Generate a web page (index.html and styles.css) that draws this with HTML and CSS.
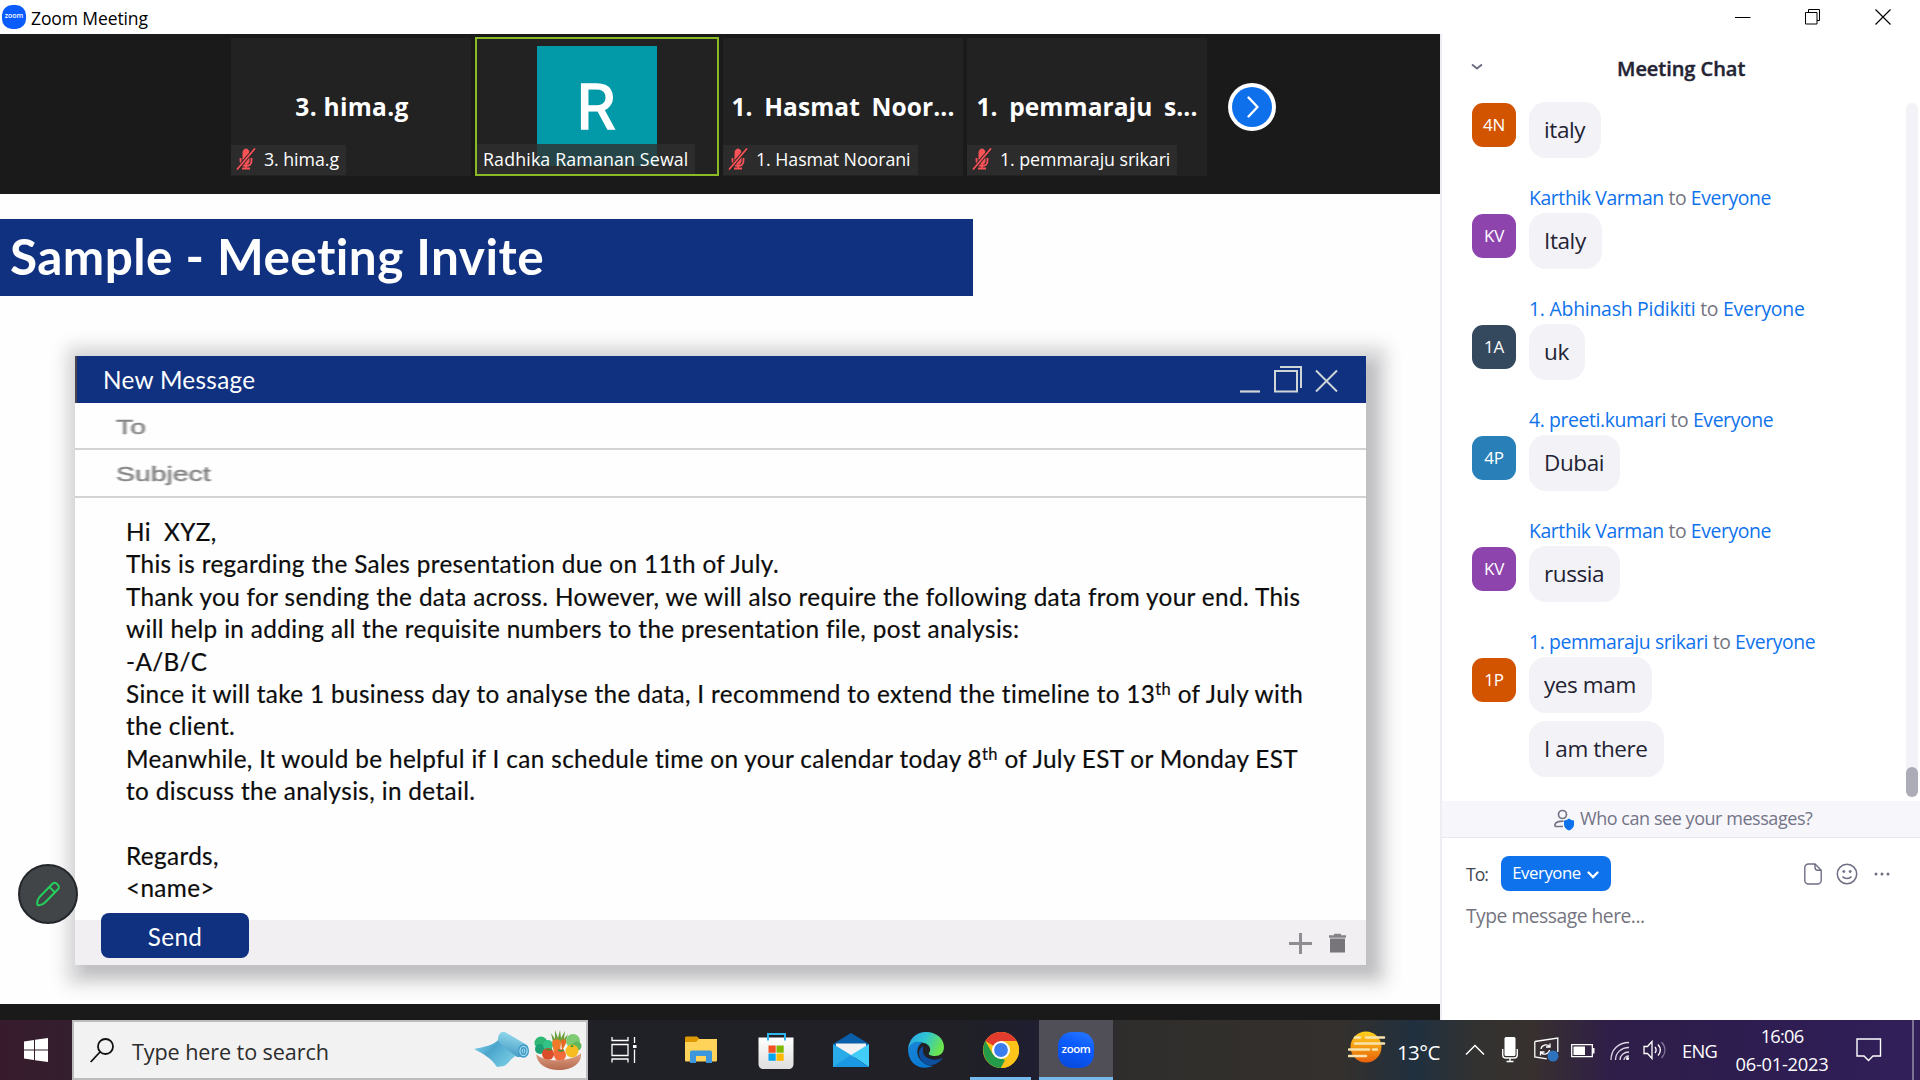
FILE: index.html
```
<!DOCTYPE html>
<html lang="en">
<head>
<meta charset="utf-8">
<title>Zoom Meeting</title>
<link rel="stylesheet" href="styles.css">
</head>
<body>
<div class="screen">
  <header class="titlebar">
    <span class="zoom-badge">zoom</span>
    <span class="titlebar-text">Zoom Meeting</span>
    <div class="window-controls">
      <svg width="16" height="16" viewBox="0 0 16 16"><path d="M0 8.500h15.500" stroke="#000" fill="none"/></svg>
      <svg width="16" height="16" viewBox="0 0 16 16"><path d="M.5 3.500h11.500v11.500H.5zM3.500 3V.5H14.500v11H12" stroke="#000" fill="none"/></svg>
      <svg width="16" height="16" viewBox="0 0 16 16"><path d="M.5.5l15 15M15.500.5l-15 15" stroke="#000" stroke-width="1.200" fill="none"/></svg>
    </div>
  </header>

  <main class="content">
    <section class="stage">
      <div class="strip">
        <div class="tile">
          <span class="tile-name">3. hima.g</span>
          <div class="label"><svg class="mic-off" viewBox="0 0 20 22"><use href="#micoff"/></svg><span>3. hima.g</span></div>
        </div>
        <div class="tile active">
          <div class="portrait">R</div>
          <div class="label label-wide"><span>Radhika Ramanan Sewal</span></div>
        </div>
        <div class="tile">
          <span class="tile-name spaced">1. Hasmat Noor...</span>
          <div class="label"><svg class="mic-off" viewBox="0 0 20 22"><use href="#micoff"/></svg><span>1. Hasmat Noorani</span></div>
        </div>
        <div class="tile">
          <span class="tile-name spaced">1. pemmaraju s...</span>
          <div class="label"><svg class="mic-off" viewBox="0 0 20 22"><use href="#micoff"/></svg><span>1. pemmaraju srikari</span></div>
        </div>
        <svg class="next" viewBox="0 0 48 48"><circle cx="24" cy="24" r="24" fill="#fff"/><circle cx="24" cy="24" r="20" fill="#0e71eb"/><path d="M20.500 14.500l9 9.500-9 9.500" fill="none" stroke="#fff" stroke-width="2.400" stroke-linecap="round" stroke-linejoin="round"/></svg>
      </div>

      <div class="slide">
        <h1 class="banner">Sample - Meeting Invite</h1>
        <div class="mail">
          <div class="mail-head">
            <span>New Message</span>
            <svg width="100" height="30" viewBox="0 0 100 30" fill="none" stroke="#cfd6d8"><path d="M1 26.500h20" stroke-width="2.200"/><path d="M36 6h22v20.500H36zM41 2h21v21" stroke-width="2"/><path d="M77 5.500l21 21M98 5.500l-21 21" stroke-width="1.900"/></svg>
          </div>
          <div class="mail-field"><span>To</span></div>
          <div class="mail-field"><span>Subject</span></div>
          <div class="mail-body">
            <p>Hi&nbsp; XYZ,</p>
            <p>This is regarding the Sales presentation due on 11th of July.</p>
            <p>Thank you for sending the data across. However, we will also require the following data from your end. This<br>will help in adding all the requisite numbers to the presentation file, post analysis:</p>
            <p>-A/B/C</p>
            <p>Since it will take 1 business day to analyse the data, I recommend to extend the timeline to 13<sup>th</sup> of July with<br>the client.</p>
            <p>Meanwhile, It would be helpful if I can schedule time on your calendar today 8<sup>th</sup> of July EST or Monday EST<br>to discuss the analysis, in detail.</p>
            <p>&nbsp;</p>
            <p>Regards,</p>
            <p>&lt;name&gt;</p>
          </div>
          <div class="mail-foot">
            <button class="send">Send</button>
            <svg width="62" height="24" viewBox="0 0 62 24"><path d="M0 12.500h23M11.500 2v21" stroke="#8f8d91" stroke-width="3"/><path d="M40 5.500h17M45 4h7" stroke="#858387" stroke-width="2.600"/><path d="M41 7.500h15v14H41z" fill="#777579"/></svg>
          </div>
        </div>
        <div class="annotate"><svg width="26" height="26" viewBox="0 0 26 26" fill="none" stroke="#24cf5a" stroke-width="2" stroke-linejoin="round"><path d="M2.500 24c-1-3 .5-6 2-8L17.500 2.800c1.200-1.200 3-1.200 4.200 0l1.300 1.300c1.200 1.200 1.200 3 0 4.200L10 21.500c-2 2-5 3-7.500 2.500zM14.500 6l5.500 5.500"/></svg></div>
      </div>
    </section>

    <aside class="chat">
      <div class="chat-head">
        <svg width="12" height="8" viewBox="0 0 12 8"><path d="M1 1.500l5 4 5-4" fill="none" stroke="#6e6e85" stroke-width="2"/></svg>
        <h2>Meeting Chat</h2>
      </div>
      <div class="chat-scroll">
        <div class="messages">
          <div class="message"><i class="avatar orange">4N</i><p class="bubble">italy</p></div>
          <p class="author">Karthik Varman <span>to</span> Everyone</p>
          <div class="message"><i class="avatar purple">KV</i><p class="bubble">Italy</p></div>
          <p class="author numbered">1. Abhinash Pidikiti <span>to</span> Everyone</p>
          <div class="message"><i class="avatar slate">1A</i><p class="bubble">uk</p></div>
          <p class="author">4. preeti.kumari <span>to</span> Everyone</p>
          <div class="message"><i class="avatar blue">4P</i><p class="bubble">Dubai</p></div>
          <p class="author">Karthik Varman <span>to</span> Everyone</p>
          <div class="message"><i class="avatar purple">KV</i><p class="bubble">russia</p></div>
          <p class="author">1. pemmaraju srikari <span>to</span> Everyone</p>
          <div class="message"><i class="avatar orange">1P</i><div class="stack"><p class="bubble">yes mam</p><p class="bubble">I am there</p></div></div>
        </div>
        <div class="scrollbar"><div class="thumb"></div></div>
      </div>
      <div class="privacy">
        <svg width="21" height="22" viewBox="0 0 21 22"><circle cx="8.500" cy="5.500" r="4" fill="none" stroke="#747487" stroke-width="1.700"/><path d="M9 17.500H2.500C1 17.500.8 16.800 1 15.500 1.500 13 4 12.200 9.500 12.200" fill="none" stroke="#747487" stroke-width="1.700"/><path d="M15 9.500c1.500 1.300 3.300 1.800 5 2v4c0 2.800-2 4.700-5 6-3-1.300-5-3.200-5-6v-4c1.700-.2 3.500-.7 5-2z" fill="#0e72ed"/></svg>
        <span>Who can see your messages?</span>
      </div>
      <div class="compose">
        <div class="compose-row">
          <span class="to">To:</span>
          <button class="pill">Everyone<svg width="12" height="8" viewBox="0 0 12 8"><path d="M1.500 1.500L6 6l4.500-4.500" fill="none" stroke="#fff" stroke-width="2.300" stroke-linecap="round"/></svg></button>
          <div class="compose-tools">
            <svg width="18" height="22" viewBox="0 0 18 22" fill="none" stroke="#6e6e85" stroke-width="1.400"><path d="M11 1H4.500C2.500 1 .8 2.500.8 4.500v13c0 2 1.700 3.500 3.700 3.500h9c2 0 3.700-1.500 3.700-3.500V7.200zM11 1v3.500c0 1.600 1 2.700 2.700 2.700h3.500"/></svg>
            <svg width="22" height="22" viewBox="0 0 22 22" fill="none" stroke="#6e6e85" stroke-width="1.500"><circle cx="11" cy="11" r="9.700"/><path d="M6.500 13.500c2 2.600 7 2.600 9 0"/><circle cx="7.800" cy="8.500" r="1.100" fill="#6e6e85" stroke-width=".8"/><circle cx="14.200" cy="8.500" r="1.100" fill="#6e6e85" stroke-width=".8"/></svg>
            <svg width="16" height="4" viewBox="0 0 16 4" fill="#6e6e85"><circle cx="2" cy="2" r="1.500"/><circle cx="8" cy="2" r="1.500"/><circle cx="14" cy="2" r="1.500"/></svg>
          </div>
        </div>
        <p class="placeholder">Type message here...</p>
      </div>
    </aside>
  </main>

  <footer class="taskbar">
    <div class="start"><svg width="24" height="24" viewBox="0 0 24 24" fill="#fff"><path d="M0 3.500L10 2v9.500H0zM11 1.800L24 0v11.500H11zM0 12.500h10V22L0 20.500zM11 12.500h13V24l-13-1.800z"/></svg></div>
    <div class="search">
      <svg width="24" height="25" viewBox="0 0 24 25" fill="none" stroke="#111" stroke-width="1.800"><circle cx="15.500" cy="8.500" r="7.500"/><path d="M10 14L.7 24"/></svg>
      <span>Type here to search</span>
      <svg class="produce" width="108" height="40" viewBox="0 0 108 40">
        <defs>
          <linearGradient id="mat" x1="0" y1="0" x2="1" y2=".6"><stop offset="0" stop-color="#8ad6ec"/><stop offset=".45" stop-color="#4ba6cd"/><stop offset="1" stop-color="#79cbe4"/></linearGradient>
          <linearGradient id="roll" x1=".6" y1="0" x2=".3" y2="1"><stop offset="0" stop-color="#9be0f1"/><stop offset="1" stop-color="#3f97c1"/></linearGradient>
          <linearGradient id="bowl" x1="0" y1="0" x2="0" y2="1"><stop offset="0" stop-color="#e2a184"/><stop offset="1" stop-color="#b56a50"/></linearGradient>
        </defs>
        <path d="M0 19c10-2 20-4 24-9l20 15c-7 2-9 9-14 11l-7 1C18 29 10 24 0 19z" fill="url(#mat)"/>
        <path d="M24 10c0-6 3-9 7-8l22 13c3 3 1 10-4 12L43 27 25 13z" fill="url(#roll)"/>
        <ellipse cx="49.500" cy="21" rx="5.500" ry="6.800" fill="#3f97c4"/><ellipse cx="49.500" cy="21" rx="3.600" ry="4.600" fill="none" stroke="#a8e2f2" stroke-width="1.200"/><ellipse cx="49.500" cy="21" rx="1.300" ry="2" fill="none" stroke="#a8e2f2"/>
        <path d="M79 12L77 3l4 6V0l3 8 2-8 1 8 4-7-1 8 4-5-3 9z" fill="#6b9f3a"/>
        <circle cx="67" cy="13" r="6.500" fill="#2fb873"/><circle cx="66" cy="19" r="5" fill="#1c9f72"/><circle cx="74" cy="15" r="5" fill="#35c488"/>
        <circle cx="99" cy="11" r="7" fill="#7ecb74"/><circle cx="103" cy="16" r="4.500" fill="#62b95c"/>
        <path d="M78 13c0-5 9-5 9 0l-2 14h-4z" fill="#f07a28"/><path d="M87 10c3-2 6 0 5 3l-4 8z" fill="#e96820"/>
        <circle cx="74" cy="24" r="6" fill="#dc4d2a"/><circle cx="86" cy="25" r="6" fill="#f2693a"/><circle cx="98" cy="21" r="6.500" fill="#f7bd20"/><path d="M96 17l2-3 2 3z" fill="#4d9a32"/>
        <path d="M72 19l3 1 3-1M84 20l3 1 3-1" stroke="#3e8c38" stroke-width="1.600" fill="none"/>
        <path d="M62 24c5 5 16 7 23 6 9 0 18-3 22-7 1 10-8 17-22 17-13 0-22-6-23-16z" fill="url(#bowl)"/>
      </svg>
    </div>
    <nav class="apps">
      <div class="app task-view"><svg width="26" height="26" viewBox="0 0 26 26" fill="none" stroke="#fff" stroke-width="1.300"><path d="M1 0v3.500h16V0M1 7.500h16v11H1zM1 25.500V22h16v3.500M23.500 0v6M23.500 12.500V26"/><path d="M22 8h3.500v3H22z" fill="#fff" stroke="none"/></svg></div>
      <div class="app"><svg width="32" height="28" viewBox="0 0 32 28"><path d="M0 2C0 1 .5.500 1.500.5H12l3 3V6H0z" fill="#dd9905"/><path d="M0 6h11l3-3h18v21c0 1-.5 1.500-1.500 1.500h-29C.5 25.500 0 25 0 24z" fill="#ffd35a"/><path d="M5 27V16.500c0-1.300.7-2 2-2h18c1.300 0 2 .7 2 2V27h-6v-7H11v7z" fill="#3d97dc"/></svg></div>
      <div class="app"><svg width="36" height="37" viewBox="0 0 36 37"><defs><linearGradient id="bag" x1="0" y1="0" x2="0" y2="1"><stop offset="0" stop-color="#fff"/><stop offset="1" stop-color="#dedede"/></linearGradient></defs><path d="M.5 5.500h35V32c0 3-2 5-5 5h-25c-3 0-5-2-5-5z" fill="url(#bag)"/><path d="M10 8.500V2h17v6.500" fill="none" stroke="#2bb6ee" stroke-width="2"/><path d="M10.500 13.500h7.200v7.200h-7.200z" fill="#f25022"/><path d="M18.500 13.500h7.200v7.200h-7.200z" fill="#7fba00"/><path d="M10.500 21.600h7.200v7.200h-7.200z" fill="#00a4ef"/><path d="M18.500 21.600h7.200v7.200h-7.200z" fill="#ffb900"/></svg></div>
      <div class="app"><svg width="36" height="34" viewBox="0 0 36 34"><path d="M0 11L18 0l18 11-6 6H6z" fill="#0a5fab"/><path d="M3 10.500h30v8L18 26 3 18.500z" fill="#f2f2f4"/><path d="M0 11l18 11-2 12H0z" fill="#28abe8"/><path d="M36 11v23L18 22z" fill="#42cdf8"/><path d="M0 34h36L18 22z" fill="#1b98e2"/></svg></div>
      <div class="app"><svg width="36" height="36" viewBox="0 0 36 36"><defs><linearGradient id="e1" x1="0" y1="0" x2="1" y2=".35"><stop offset="0" stop-color="#2ba4e8"/><stop offset=".5" stop-color="#2fc5d4"/><stop offset="1" stop-color="#69e350"/></linearGradient><linearGradient id="e2" x1="0" y1="0" x2=".6" y2="1"><stop offset="0" stop-color="#1b86d8"/><stop offset="1" stop-color="#0878d2"/></linearGradient></defs><path d="M0 17C1 7 8 0 18 0c11 0 18 7 18 15 0 6-4 9-9 9-4 0-7-1-6-3 3-4 0-9-5-10C9 9 3 12 0 17z" fill="url(#e1)"/><path d="M0 17c3-7 9-9 14-6-5 3-6 9-3 15 3 5 9 8 14 8C13 39 0 33 0 17z" fill="url(#e2)"/><path d="M15 14c-6 4-5 12 1 17 6 4 13 2 18-4 .5-.8 0-1.200-.8-.8C25 30 15 26 15 19z" fill="#0d4f9e"/></svg></div>
      <div class="app running"><svg width="36" height="36" viewBox="0 0 36 36"><circle cx="18" cy="18" r="18" fill="#fbc116"/><path d="M18 18L2.400 9A18 18 0 0 1 33.600 9H18z" fill="#e33b2e"/><path d="M2.400 9L10 22.500 18 26l4 2-4 8C5 36-4 22 2.400 9z" fill="#249b48"/><path d="M18 36l8-14V9h7.600A18 18 0 0 1 18 36z" fill="#fcc31a"/><circle cx="18" cy="18" r="9" fill="#fff"/><circle cx="18" cy="18" r="6.900" fill="#3b7ded"/></svg></div>
      <div class="app current"><span class="zoom-app">zoom</span></div>
    </nav>
    <div class="tray">
      <svg class="weather" width="38" height="32" viewBox="0 0 38 32"><defs><linearGradient id="sun" x1="0" y1="0" x2="0" y2="1"><stop offset="0" stop-color="#ffd21c"/><stop offset="1" stop-color="#e9600c"/></linearGradient></defs><circle cx="18" cy="16" r="15.500" fill="url(#sun)"/><path d="M7 6.500h5M18 6.500h18M7 12.500h29M1 18.500h20M25 18.500h4M1 25h17" stroke="#f8e3ac" stroke-width="2.600" stroke-linecap="round"/></svg>
      <span class="temp">13°C</span>
      <svg class="caret" width="20" height="12" viewBox="0 0 20 12"><path d="M1 10.500L10 1.500l9 9" fill="none" stroke="#fff" stroke-width="1.500"/></svg>
      <svg class="mic" width="16" height="26" viewBox="0 0 16 26"><rect x="2.500" y="0" width="11" height="19" rx="1.500" fill="#fff"/><path d="M.7 12v6c0 2 1 3 3 3h8.600c2 0 3-1 3-3v-6M8 21v3.500M4.500 24.500h7" fill="none" stroke="#fff" stroke-width="1.400"/></svg>
      <svg class="sync" width="26" height="26" viewBox="0 0 26 26" fill="none" stroke="#fff" stroke-width="1.300"><path d="M.8 4.500L23.800 1v14M.8 4.500V20l12 1.800M7 12c.5-4 6-5.500 8.500-2.500M16 6.500v3.500h-4M15.500 13c-.5 4-6 5.500-8.500 2.500M6.500 18.500V15h4"/><circle cx="19" cy="19" r="5.500" fill="#2d72bd" stroke="none"/></svg>
      <svg class="battery" width="24" height="14" viewBox="0 0 24 14"><path d="M.7.700h20.600v12H.7z" fill="none" stroke="#fff" stroke-width="1.300"/><path d="M2.500 2.500H14v8.500H2.500zM21.500 4H23.500v5.500h-2z" fill="#fff"/></svg>
      <svg class="wifi" width="20" height="20" viewBox="0 0 20 20" fill="none" stroke="#ddd8e4" stroke-width="1.300"><path d="M1 19C1 9 8 1.500 19 1.500M5.500 19C5.500 12 11 6.500 19 6.500M10 19c0-4.500 4-8 9-8M14 19c0-2 2-4 5-4"/><circle cx="17.500" cy="17.500" r="1.600" fill="#fff" stroke="none"/></svg>
      <svg class="volume" width="24" height="20" viewBox="0 0 24 20" fill="none" stroke="#fff" stroke-width="1.300"><path d="M1 6.500h3.500L9 1.500v17l-4.500-5H1zM12 7c1.500 2 1.500 4 0 6M15 4.500c3 3.500 3 7.500 0 11"/><path d="M18.500 2c4.500 5 4.500 11 0 16" stroke="#83779b"/></svg>
      <span class="lang">ENG</span>
      <div class="clock"><span class="time">16:06</span><span>06-01-2023</span></div>
      <svg class="notes" width="26" height="25" viewBox="0 0 26 25"><path d="M1 1h23.500v17H17l-4.500 4.500L8 18H1z" fill="none" stroke="#fff" stroke-width="1.400"/></svg>
      <div class="show-desktop"></div>
    </div>
  </footer>
</div>
<svg width="0" height="0" class="sprite"><symbol id="micoff" viewBox="0 0 20 22"><path d="M7 4.500C7 2.500 8.300 1 10 1s3 1.500 3 3.500V13c0 2-1.300 3.500-3 3.500S7 15 7 13z" fill="#fa5257" stroke="#fa5257"/><path d="M4.500 10v2.500c0 3.500 2 5.500 5.500 5.500s5.500-2 5.500-5.500V10M10 18v3M6 20.500h8" fill="none" stroke="#fa5257" stroke-width="1.800"/><path d="M1 21.500L19 .5" stroke="#262626" stroke-width="3.600"/><path d="M1 21.500L19 .5" stroke="#fa5257" stroke-width="1.800"/></symbol></svg>
</body>
</html>
```
FILE: styles.css
```
* { box-sizing: border-box; }
body { margin: 0; font-family: "Open Sans", "Noto Sans", sans-serif; overflow: hidden; }
p, h1, h2 { margin: 0; }
svg { display: block; flex: none; }
button { border: 0; padding: 0; font: inherit; }
.sprite { position: absolute; }

.screen { width: 1920px; height: 1080px; display: flex; flex-direction: column; background: #fff; }

/* window title bar */
.titlebar { height: 34px; flex: none; display: flex; align-items: center; padding: 0 29px 0 2px; }
.zoom-badge { width: 24px; height: 24px; border-radius: 10px; background: #0b5cff; color: #fff; font-size: 7px; font-weight: 600; line-height: 22px; text-align: center; }
.titlebar-text { margin-left: 5px; font-size: 17.5px; letter-spacing: -.1px; line-height: 34px; padding-top: 1px; color: #000; }
.window-controls { margin-left: auto; display: flex; gap: 54px; }

.content { height: 986px; flex: none; display: flex; }
.stage { width: 1440px; display: flex; flex-direction: column; background: #1a1a1a; }

/* participant strip */
.strip { height: 160px; flex: none; display: flex; align-items: flex-start; gap: 4px; padding: 3px 0 0 231px; }
.tile { position: relative; width: 240px; height: 138px; margin-top: 1px; background: #222; display: flex; align-items: center; justify-content: center; }
.tile.active { width: 244px; height: 139px; margin-top: 0; border: 2px solid #8aba26; align-items: flex-start; padding-top: 7px; }
.tile-name { font-size: 24.5px; font-weight: 700; letter-spacing: .3px; color: #fff; line-height: 34px; white-space: nowrap; padding-left: 2px; }
.tile-name.spaced { letter-spacing: .1px; word-spacing: 5px; padding: 0; }
.portrait { width: 120px; height: 120px; background: #0299a9; color: #fff; font-family: Roboto, sans-serif; font-size: 63px; line-height: 123px; padding-right: 2px; text-align: center; -webkit-text-stroke: 1.5px #fff; }
.label { position: absolute; left: 0; bottom: 1px; height: 30px; display: flex; align-items: center; gap: 8px; padding: 0 7px 2px 5px; background: rgba(48,48,48,.8); color: #fff; font-size: 17.8px; letter-spacing: -.06px; white-space: nowrap; }
.label-wide { left: 0; bottom: 0; padding: 0 6px 1px; letter-spacing: .15px; }
.mic-off { width: 20px; height: 22px; }
.next { width: 48px; height: 48px; margin: 46px 0 0 17px; }

/* shared slide */
.slide { position: relative; height: 810px; flex: none; padding: 25px 0 0; background: #fefefe; }
.banner { width: 973px; height: 77px; padding-left: 10px; background: #0f3180; color: #fff; font: 700 49.5px/74px Lato, sans-serif; letter-spacing: .46px; white-space: pre; }
.mail { width: 1291px; height: 609px; margin: 60px 0 0 75px; display: flex; flex-direction: column; background: #fefefe; box-shadow: 6px 5px 16px 14px rgba(80,75,82,.24), 9px 9px 10px 2px rgba(80,75,82,.14); font-family: Lato, sans-serif; }
.mail-head { height: 47px; flex: none; display: flex; align-items: center; justify-content: space-between; padding: 0 27px 0 26px; border-left: 2px solid #4a4450; background: #0f3180; color: #fff; font-size: 24.3px; letter-spacing: .3px; }
.mail-field { height: 48px; flex: none; border-bottom: 2px solid #d3d2d4; padding: 2px 0 0 41px; display: flex; align-items: center; }
.mail-field:nth-child(2) { height: 47px; }
.mail-field span { font: 21px "Liberation Sans", sans-serif; color: #858585; -webkit-text-stroke: .5px #858585; transform: scaleX(1.35); transform-origin: left; filter: blur(.6px); }
.mail-body { height: 422px; flex: none; padding: 18px 0 0 51px; color: #0c0c0c; font-size: 24.3px; line-height: 32.4px; letter-spacing: .36px; white-space: nowrap; -webkit-text-stroke: .2px #0c0c0c; }
.mail-body sup { font-size: 16.5px; line-height: 0; vertical-align: 8px; }
.mail-foot { height: 45px; flex: none; display: flex; align-items: center; justify-content: space-between; padding: 0 15px 0 26px; background: #f1eff2; }
.mail-foot svg { filter: blur(.6px); }
.send { width: 148px; height: 45px; margin-top: -14px; padding-top: 2px; border-radius: 8px; background: #0f3180; color: #fff; font-family: Lato, sans-serif; font-size: 24.3px; letter-spacing: .4px; }
.annotate { position: absolute; left: 18px; top: 670px; width: 60px; height: 60px; border-radius: 50%; border: 2px solid #23272b; background: #414548; display: grid; place-items: center; }

/* chat panel */
.chat { width: 480px; border-left: 2px solid #ededf3; background: #fff; display: flex; flex-direction: column; }
.chat-head { height: 68px; flex: none; display: flex; align-items: flex-start; padding: 29px 0 0 29px; }
.chat-head h2 { margin: -8px 0 0 134px; font-size: 20px; font-weight: 600; line-height: 28px; letter-spacing: -.05px; color: #232333; -webkit-text-stroke: .4px #232333; }
.chat-scroll { height: 699px; flex: none; display: flex; justify-content: space-between; padding-right: 2px; }
.messages { padding-left: 30px; }
.message { display: flex; align-items: flex-start; }
.avatar { width: 44px; height: 44px; margin: 1px 13px 0 0; border-radius: 11px; color: #fff; font-size: 17px; font-style: normal; line-height: 44px; text-align: center; letter-spacing: -.2px; }
.orange { background: #d35400; }
.purple { background: #8e44ad; }
.slate { background: #34495e; }
.blue { background: #2980b9; }
.bubble { width: max-content; height: 56px; padding: 0 16px 0 15px; border-radius: 17px; background: #f2f2f7; color: #232333; font-size: 22.5px; line-height: 56px; letter-spacing: -.4px; }
.stack { display: flex; flex-direction: column; gap: 8px; }
.author { margin: 26px 0 0 57px; font-size: 19.4px; line-height: 27px; padding-bottom: 2px; letter-spacing: -.4px; color: #0e72ed; white-space: nowrap; }
.author.numbered { letter-spacing: -.24px; }
.author span { color: #747480; }
.scrollbar { width: 12px; height: 694px; margin-top: 1px; border-radius: 6px; background: #f2f2f7; display: flex; align-items: flex-end; }
.thumb { width: 12px; height: 30px; border-radius: 6px; background: #acacb7; }
.privacy { height: 37px; flex: none; display: flex; align-items: center; gap: 5px; padding: 0 0 3px 112px; border-bottom: 1px solid #e8e8f0; background: #f7f7fb; color: #747487; font-size: 18px; letter-spacing: -.45px; }
.privacy svg { margin-top: 5px; }
.compose { padding: 18px 30px 0 24px; }
.compose-row { display: flex; align-items: center; }
.to { width: 35px; font-size: 17.6px; letter-spacing: -1px; color: #444453; }
.pill { width: 110px; height: 35px; border-radius: 8px; background: #0e72ed; color: #fff; font-size: 16.8px; letter-spacing: -.45px; display: flex; align-items: center; justify-content: center; gap: 6px; padding: 0 1px 2px 0; }
.pill svg { margin-top: 5px; }
.compose-tools { margin-left: auto; display: flex; align-items: center; gap: 14px; }
.compose-tools svg:last-child { margin-left: 2px; }
.placeholder { margin-top: 11px; font-size: 19.3px; line-height: 28px; letter-spacing: -.5px; color: #747480; }

/* taskbar */
.taskbar { height: 60px; flex: none; display: flex; color: #fff; background: linear-gradient(90deg, #371b2c 0, #33202f 90px, #202027 600px, #202026 960px, #1e1e30 1030px, #302e2c 1130px, #33302d 1345px, #20303f 1415px, #333230 1480px, #37302f 1535px, #2f1e48 1610px, #2d1d50 1750px, #311f5a 1920px); }
.start { width: 72px; display: grid; place-items: center; }
.search { width: 516px; display: flex; align-items: center; padding: 0 4px 0 16px; border: 2px solid #bcbcbe; background: #f2f2f2; color: #2c2c2c; }
.search span { margin-left: 18px; font-size: 21.6px; letter-spacing: -.1px; line-height: 56px; padding-top: 4px; }
.produce { margin-left: auto; }
.apps { display: flex; }
.app { width: 75px; height: 60px; display: grid; place-items: center; }
.task-view { padding-right: 3px; }
.running { box-shadow: inset 0 -3px #76b9ed; width: 61px; margin: 0 8px 0 7px; }
.current { width: 74px; background: #504e57; box-shadow: inset 0 -3px #76b9ed; }
.zoom-app { width: 36px; height: 36px; border-radius: 14px; background: linear-gradient(200deg, #2b7bff, #0b5cff 40%, #0748d8); font-size: 11.5px; font-weight: 600; line-height: 34px; text-align: center; letter-spacing: -.4px; }
.tray { margin-left: auto; display: flex; align-items: center; }
.weather { margin-top: -6px; }
.temp { width: 68px; margin-left: 11px; padding-top: 3px; font-size: 20.5px; letter-spacing: -.6px; }
.caret { margin-right: 17px; }
.mic { margin: 0 16px 0 0; }
.sync { margin-right: 11px; }
.battery { margin: 2px 15px 0 0; }
.wifi { margin: 2px 13px 0 0; }
.volume { margin-right: 15px; }
.lang { width: 52px; font-size: 18.3px; letter-spacing: -.7px; }
.clock { width: 96px; height: 60px; display: flex; flex-direction: column; align-items: center; font-size: 18.3px; line-height: 28px; letter-spacing: -.25px; padding-top: 2px; white-space: nowrap; }
.time { letter-spacing: -.8px; }
.notes { margin-left: 26px; }
.show-desktop { width: 8px; height: 60px; margin-left: 30px; border-left: 2px solid #7d7393; }
```
